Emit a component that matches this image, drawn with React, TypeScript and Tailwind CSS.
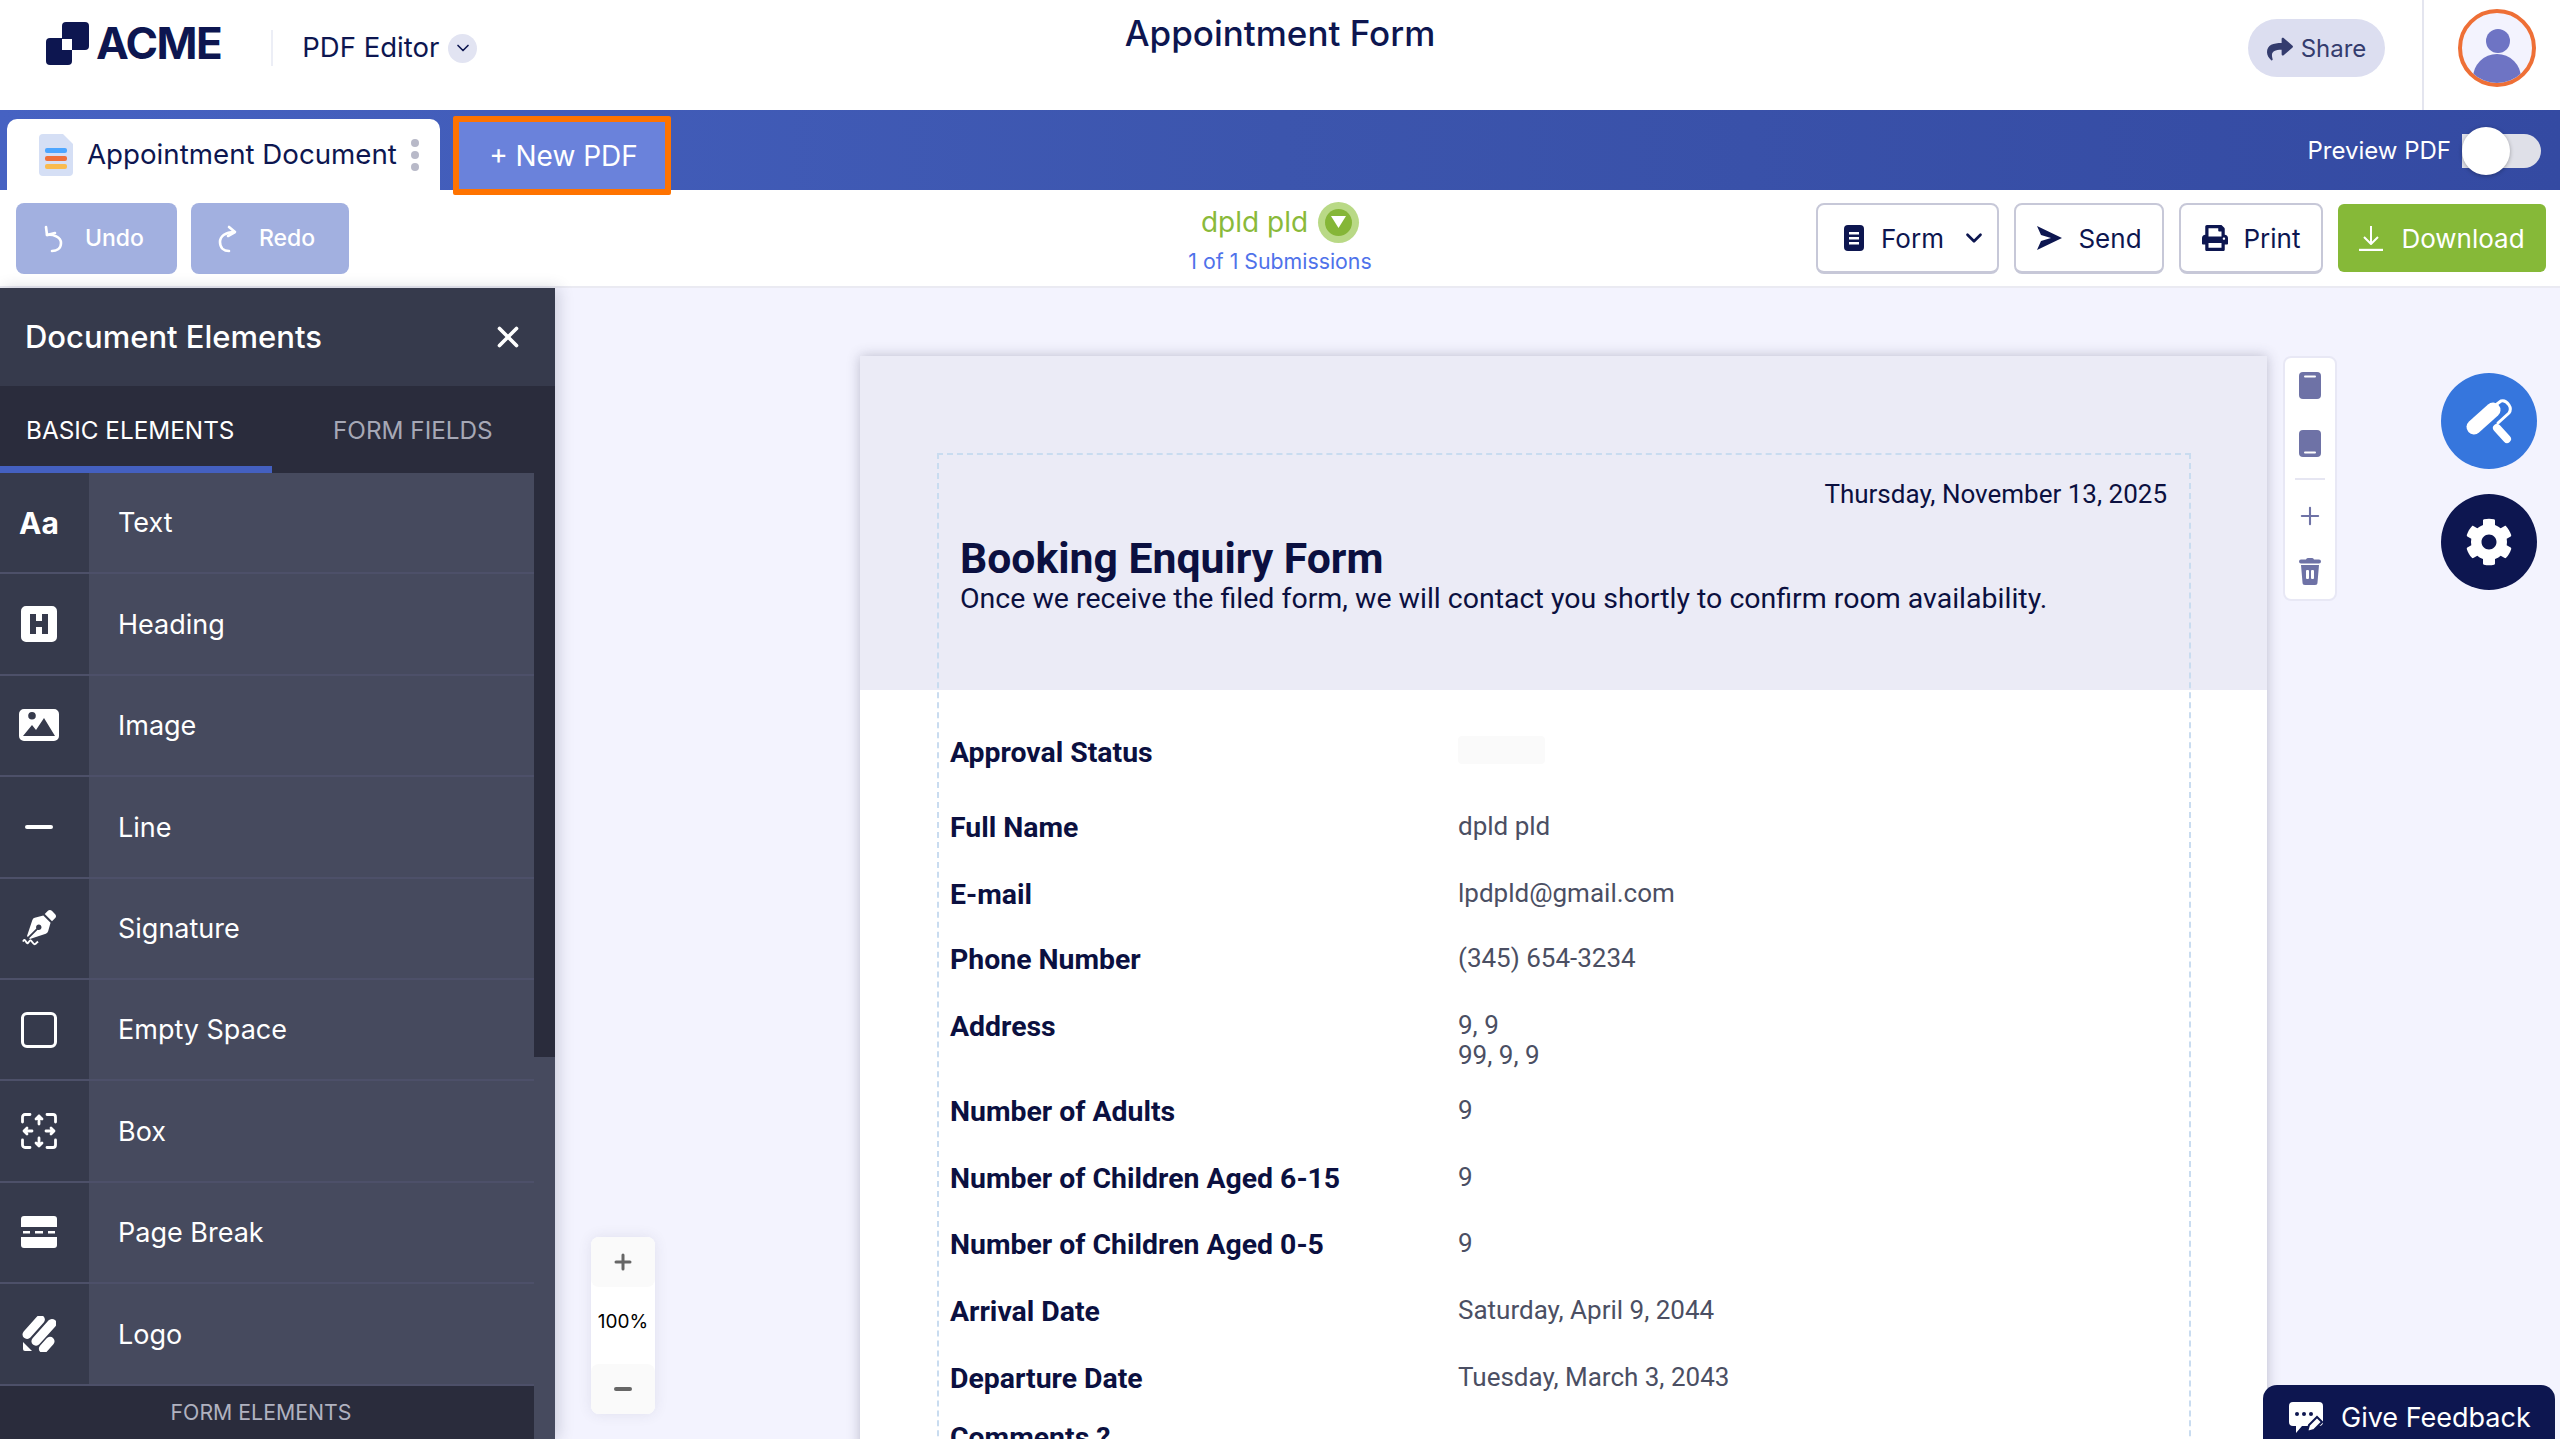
import type { ReactNode } from 'react'
import { ChevronDown, Plus, X } from 'lucide-react'
import { FaCog, FaPenNib, FaPrint, FaShare } from 'react-icons/fa'

function LogoMark() {
  return (
    <svg width="43" height="43" viewBox="0 0 43 43">
      <rect x="16" y="0" width="27" height="28" rx="4" fill="#0d1650" />
      <rect x="0" y="16" width="26" height="27" rx="4" fill="#0d1650" />
      <rect x="16" y="17" width="10" height="11" fill="#fff" />
    </svg>
  )
}

function TabDocIcon() {
  return (
    <svg width="34" height="42" viewBox="0 0 34 42">
      <path d="M4 0h20l10 10v28a4 4 0 0 1-4 4H4a4 4 0 0 1-4-4V4a4 4 0 0 1 4-4z" fill="#d5dff5" />
      <rect x="6" y="14" width="22" height="5" rx="2" fill="#4da6ff" />
      <rect x="6" y="22" width="22" height="5" rx="2" fill="#f0703a" />
      <rect x="6" y="30" width="22" height="5" rx="2" fill="#f9bb4f" />
    </svg>
  )
}

function UndoIcon() {
  return (
    <svg width="22" height="28" viewBox="0 0 22 28" fill="none" stroke="#fff" strokeWidth="2.6" strokeLinecap="round" strokeLinejoin="round">
      <path d="M3 2l1 8 8-2" />
      <path d="M4 10c6-1 14 2 14 8s-5 8-9 8" />
    </svg>
  )
}

function RedoIcon() {
  return (
    <svg width="22" height="28" viewBox="0 0 22 28" fill="none" stroke="#fff" strokeWidth="2.6" strokeLinecap="round" strokeLinejoin="round">
      <path d="M13 2l6 5-7 4" />
      <path d="M18 7c-8 0-14 4-14 10s4 9 9 9" />
    </svg>
  )
}

function FormIcon() {
  return (
    <svg width="20" height="26" viewBox="0 0 20 26">
      <rect width="20" height="26" rx="4" fill="#0d1650" />
      <rect x="5" y="7" width="10" height="2.5" fill="#fff" />
      <rect x="5" y="12" width="10" height="2.5" fill="#fff" />
      <rect x="5" y="17" width="10" height="2.5" fill="#fff" />
    </svg>
  )
}

function SendIcon() {
  return (
    <svg width="26" height="24" viewBox="0 0 26 24">
      <path d="M1 0l25 12L1 24l4-9 10-3L5 9z" fill="#0d1650" />
    </svg>
  )
}

function DownloadIcon() {
  return (
    <svg width="24" height="26" viewBox="0 0 24 26" fill="none" stroke="#fff" strokeWidth="2">
      <path d="M12 1v17M5 12l7 7 7-7" strokeLinejoin="round" />
      <path d="M0 25h24" strokeWidth="2.4" />
    </svg>
  )
}

function HeadingIcon() {
  return (
    <svg width="36" height="36" viewBox="0 0 36 36">
      <path fillRule="evenodd" d="M5 0h26a5 5 0 0 1 5 5v26a5 5 0 0 1-5 5H5a5 5 0 0 1-5-5V5a5 5 0 0 1 5-5zm4 8v20h6v-7h6v7h6V8h-6v7h-6V8z" fill="#fff" />
    </svg>
  )
}

function ImageIcon() {
  return (
    <svg width="40" height="32" viewBox="0 0 40 32">
      <path fillRule="evenodd" d="M5 0h30a5 5 0 0 1 5 5v22a5 5 0 0 1-5 5H5a5 5 0 0 1-5-5V5a5 5 0 0 1 5-5zm8 10.500a3.800 3.800 0 1 0 0-7.600 3.800 3.800 0 0 0 0 7.600zM4 27l9-11 4 5 8-12 11 18z" fill="#fff" />
    </svg>
  )
}

function SignatureIcon() {
  return (
    <span className="relative block h-[36px] w-[34px]">
      <FaPenNib className="absolute top-0 right-0 size-[29px] text-white" />
      <svg className="absolute bottom-0 left-0" width="17" height="10" viewBox="0 0 16 9" fill="none" stroke="#fff" strokeWidth="1.800">
        <path d="M1 5c2-5 3 4 5 1s2-3 4 0 3 1 5-1" />
      </svg>
    </span>
  )
}

function BoxIcon() {
  return (
    <svg width="36" height="36" viewBox="0 0 36 36" fill="none" stroke="#fff" strokeWidth="2.800" strokeLinecap="round" strokeLinejoin="round">
      <path d="M1.500 9V4a2.500 2.500 0 0 1 2.500-2.500h5M26 1.500h6A2.500 2.500 0 0 1 34.500 4v5M34.500 27v5a2.500 2.500 0 0 1-2.500 2.500h-6M9 34.500H4A2.500 2.500 0 0 1 1.500 32v-5" />
      <path d="M18 11V3M15 6l3-3 3 3M18 25v8M15 30l3 3 3-3M11 18H3M6 15l-3 3 3 3M25 18h8M30 15l3 3-3 3" />
    </svg>
  )
}

function PageBreakIcon() {
  return (
    <svg width="36" height="32" viewBox="0 0 36 32" fill="#fff">
      <path d="M3 0h30a3 3 0 0 1 3 3v8H0V3a3 3 0 0 1 3-3z" />
      <rect x="2" y="15" width="7" height="2.500" />
      <rect x="14" y="15" width="8" height="2.500" />
      <rect x="27" y="15" width="7" height="2.500" />
      <path d="M0 21h36v8a3 3 0 0 1-3 3H3a3 3 0 0 1-3-3z" />
    </svg>
  )
}

function BrandIcon() {
  return (
    <svg width="34" height="36" viewBox="0 0 34 36" fill="#fff">
      <rect x="-3" y="7" width="29" height="9" rx="4.500" transform="rotate(-48 11 11)" />
      <rect x="6" y="12" width="33" height="9" rx="4.500" transform="rotate(-48 22 17)" />
      <rect x="15" y="25" width="19" height="9" rx="4.500" transform="rotate(-48 24 29)" />
      <path d="M1 26l9 9H3a2 2 0 0 1-2-2z" />
    </svg>
  )
}

function RollerIcon() {
  return (
    <svg width="96" height="96" viewBox="0 0 96 96" fill="none" stroke="#fff" strokeLinecap="round" strokeLinejoin="round">
      <path d="M33 54L52 37" strokeWidth="15" />
      <path d="M56 31l4-3c3-1 6 1 8 4 2 3 2 5 0 8L57 50" strokeWidth="3" />
      <path d="M56 55l10 11" strokeWidth="8" />
    </svg>
  )
}

function PageTopIcon() {
  return (
    <svg width="22" height="27" viewBox="0 0 22 27">
      <rect width="22" height="27" rx="4" fill="#6e72a6" />
      <rect x="5" y="3.500" width="12" height="2" rx="1" fill="#fff" />
    </svg>
  )
}

function PageBottomIcon() {
  return (
    <svg width="22" height="27" viewBox="0 0 22 27">
      <rect width="22" height="27" rx="4" fill="#6e72a6" />
      <rect x="5" y="21.500" width="12" height="2" rx="1" fill="#fff" />
    </svg>
  )
}

function TrashIcon() {
  return (
    <svg width="22" height="27" viewBox="0 0 22 27">
      <path d="M7 1.500a2 2 0 0 1 2-1.500h4a2 2 0 0 1 2 1.500h5a2 2 0 0 1 0 4H2a2 2 0 0 1 0-4z" fill="#6e72a6" />
      <path d="M2 7h18l-1.500 17.500a2.500 2.500 0 0 1-2.500 2.500H6a2.500 2.500 0 0 1-2.500-2.500z" fill="#6e72a6" />
      <rect x="7" y="12" width="3" height="9" rx="1" fill="#fff" />
      <rect x="12" y="12" width="3" height="9" rx="1" fill="#fff" />
    </svg>
  )
}

function FeedbackIcon() {
  return (
    <svg width="34" height="32" viewBox="0 0 34 32">
      <path d="M4 0h26a4 4 0 0 1 4 4v16a4 4 0 0 1-4 4H13l-6 7v-7H4a4 4 0 0 1-4-4V4a4 4 0 0 1 4-4z" fill="#fff" />
      <circle cx="8" cy="12" r="2" fill="#0d1650" />
      <circle cx="15" cy="12" r="2" fill="#0d1650" />
      <circle cx="22" cy="12" r="2" fill="#0d1650" />
      <path d="M18 30l2-7 8-8 5 5-8 8z" fill="#fff" stroke="#0d1650" strokeWidth="2" />
    </svg>
  )
}

const elements: { label: string; icon: ReactNode }[] = [
  { label: 'Text', icon: <span className="font-['Inter'] text-[30px] leading-none font-bold text-white">Aa</span> },
  { label: 'Heading', icon: <HeadingIcon /> },
  { label: 'Image', icon: <ImageIcon /> },
  { label: 'Line', icon: <span className="block h-[4px] w-[28px] rounded-full bg-white" /> },
  { label: 'Signature', icon: <SignatureIcon /> },
  { label: 'Empty Space', icon: <span className="block h-[36px] w-[36px] rounded-[6px] border-[3px] border-white" /> },
  { label: 'Box', icon: <BoxIcon /> },
  { label: 'Page Break', icon: <PageBreakIcon /> },
  { label: 'Logo', icon: <BrandIcon /> },
]

const fields: { label: string; value?: string; rowClass: string; valueLines?: string[] }[] = [
  { label: 'Approval Status', rowClass: 'h-[75px]' },
  { label: 'Full Name', value: 'dpld pld', rowClass: 'h-[67px]' },
  { label: 'E-mail', value: 'lpdpld@gmail.com', rowClass: 'h-[65px]' },
  { label: 'Phone Number', value: '(345) 654-3234', rowClass: 'h-[67px]' },
  { label: 'Address', valueLines: ['9, 9', '99, 9, 9'], rowClass: 'h-[85px]' },
  { label: 'Number of Adults', value: '9', rowClass: 'h-[67px]' },
  { label: 'Number of Children Aged 6-15', value: '9', rowClass: 'h-[66px]' },
  { label: 'Number of Children Aged 0-5', value: '9', rowClass: 'h-[67px]' },
  { label: 'Arrival Date', value: 'Saturday, April 9, 2044', rowClass: 'h-[67px]' },
  { label: 'Departure Date', value: 'Tuesday, March 3, 2043', rowClass: 'h-[59px]' },
  { label: 'Comments ?', rowClass: 'h-[60px]' },
]

function TopBar() {
  return (
    <header className="grid h-[110px] flex-none grid-cols-[1fr_auto_1fr] bg-white">
      <div className="flex items-start">
        <div className="mt-[21px] ml-[46px] flex items-center gap-[7px]">
          <LogoMark />
          <span className="text-[44px] leading-none font-bold tracking-[-1.5px] text-[#0d1650]">ACME</span>
        </div>
        <div className="mt-[30px] ml-[50px] h-[36px] w-[2px] bg-[#eceef6]" />
        <div className="mt-[30px] ml-[29px] flex h-[36px] items-center gap-[9px]">
          <span className="text-[27.500px] text-[#0d1650]">PDF Editor</span>
          <span className="grid size-[29px] place-items-center rounded-full bg-[#e2e4f2]">
            <ChevronDown className="size-[20px] text-[#0d1650]" />
          </span>
        </div>
      </div>
      <h1 className="mt-[13px] text-[35px] leading-[40px] font-medium text-[#0d1650]">Appointment Form</h1>
      <div className="flex items-start justify-end">
        <button className="mt-[19px] flex h-[58px] w-[137px] items-center justify-center gap-[8px] rounded-full bg-[#dcdef0] pt-[2px] text-[24px] text-[#343c6e]">
          <FaShare className="size-[26px]" />
          Share
        </button>
        <div className="ml-[37px] flex h-full w-[138px] border-l-2 border-[#e4e5ef] pt-[9px] pl-[34px]">
          <div className="relative size-[78px] overflow-hidden rounded-full border-[4px] border-[#ee6f36] bg-[#f3f3fe]">
            <div className="absolute top-[16px] left-[24px] size-[24px] rounded-full bg-[#6e74c4]" />
            <div className="absolute top-[41px] left-[11px] h-[50px] w-[48px] rounded-full bg-[#6e74c4]" />
          </div>
        </div>
      </div>
    </header>
  )
}

function TabBar() {
  return (
    <div className="flex h-[80px] flex-none bg-gradient-to-r from-[#4662c2] via-[#3c55ad] to-[#344aa2] pl-[7px]">
      <div className="mt-[9px] flex h-[71px] w-[433px] items-center rounded-t-[10px] bg-white pl-[32px]">
        <TabDocIcon />
        <span className="ml-[14px] text-[27.700px] text-[#0d1650]">Appointment Document</span>
        <span className="ml-[14px] flex flex-col gap-[4px]">
          <span className="size-[8px] rounded-full bg-[#b8b9c8]" />
          <span className="size-[8px] rounded-full bg-[#b8b9c8]" />
          <span className="size-[8px] rounded-full bg-[#b8b9c8]" />
        </span>
      </div>
      <button className="relative z-20 mt-[6px] ml-[13px] h-[79px] w-[218px] rounded-[2px] border-[6px] border-[#ff7300] bg-[#6a82db] pl-[3px] text-[28px] text-white">
        + New PDF
      </button>
      <div className="ml-auto flex items-center pt-[2px] pr-[19px]">
        <span className="text-[24px] text-white">Preview PDF</span>
        <div className="relative ml-[11px] h-[34px] w-[79px] rounded-r-full bg-[#dfe0e8]">
          <div className="absolute top-[-7px] left-0 size-[48px] rounded-full bg-white shadow-[0_1px_4px_rgba(0,0,0,0.3)]" />
        </div>
      </div>
    </div>
  )
}

function ToolButton({ children, className }: { children: ReactNode; className: string }) {
  return (
    <button className={`flex h-[71px] items-center justify-center rounded-[8px] border-2 border-b-[3px] border-[#c7c8d8] bg-white text-[26px] text-[#0d1650] ${className}`}>
      {children}
    </button>
  )
}

function Toolbar() {
  return (
    <div className="z-10 grid h-[98px] flex-none grid-cols-[1fr_auto_1fr] border-b-2 border-[#eaeaf2] bg-white">
      <div className="flex gap-[14px] pt-[13px] pl-[16px]">
        <button className="flex h-[71px] w-[161px] items-center rounded-[8px] bg-[#a2b0e0] pl-[27px] text-[23px] font-medium text-white">
          <UndoIcon />
          <span className="ml-[20px]">Undo</span>
        </button>
        <button className="flex h-[71px] w-[158px] items-center rounded-[8px] bg-[#a2b0e0] pl-[25px] text-[23px] font-medium text-white">
          <RedoIcon />
          <span className="ml-[21px]">Redo</span>
        </button>
      </div>
      <div className="flex flex-col items-center pt-[11px]">
        <div className="flex items-center gap-[10px]">
          <span className="text-[28px] leading-[42px] text-[#8aba3a]">dpld pld</span>
          <span className="grid size-[41px] place-items-center rounded-full bg-[#b9d986]">
            <span className="grid size-[27px] place-items-center rounded-full bg-[#85b637]">
              <svg width="15" height="12" viewBox="0 0 15 12">
                <path d="M0 0h15l-7.500 12z" fill="#fff" />
              </svg>
            </span>
          </span>
        </div>
        <span className="mt-[4px] text-[21.300px] leading-[28px] text-[#4f72ea]">1 of 1 Submissions</span>
      </div>
      <div className="flex justify-end gap-[15px] pt-[13px] pr-[14px]">
        <ToolButton className="w-[183px] gap-[17px] pl-[16px]">
          <FormIcon />
          Form
          <ChevronDown className="size-[26px]" strokeWidth={2.5} />
        </ToolButton>
        <ToolButton className="w-[150px] gap-[16px]">
          <SendIcon />
          Send
        </ToolButton>
        <ToolButton className="w-[144px] gap-[16px]">
          <FaPrint className="size-[26px]" />
          Print
        </ToolButton>
        <button className="mt-[1px] flex h-[68px] w-[208px] items-center justify-center gap-[18px] rounded-[6px] bg-[#86b938] text-[26px] text-white">
          <DownloadIcon />
          Download
        </button>
      </div>
    </div>
  )
}

function Sidebar() {
  return (
    <aside className="z-10 flex w-[555px] flex-none flex-col shadow-[4px_0_14px_rgba(40,42,70,0.18)]">
      <div className="flex h-[98px] flex-none items-center justify-between bg-[#363a4c] pr-[30px] pl-[25px]">
        <span className="text-[31px] font-medium text-white">Document Elements</span>
        <X className="size-[34px] text-white" strokeWidth={2.6} />
      </div>
      <div className="flex h-[87px] flex-none bg-[#2a2c3c] text-[24.300px]">
        <div className="flex w-[272px] items-center border-b-[7px] border-[#4460c0] pt-[9px] pl-[26px] text-white">BASIC ELEMENTS</div>
        <div className="flex items-center pt-[2px] pl-[61px] text-[#a6a8b6]">FORM FIELDS</div>
      </div>
      <div className="flex min-h-0 flex-1">
        <div className="flex w-[534px] flex-none flex-col">
          <div className="flex-none">
            {elements.map((el) => (
              <div key={el.label} className="flex h-[101.400px] border-b-2 border-[#4d5069]">
                <div className="flex w-[89px] flex-none items-center justify-center bg-[#363a4c] pr-[11px]">{el.icon}</div>
                <div className="flex flex-1 items-center bg-[#464a5e] pt-[2px] pl-[29px] text-[27px] text-white">{el.label}</div>
              </div>
            ))}
          </div>
          <div className="flex flex-1 items-center justify-center bg-[#2a2c3c] pt-[2px] pr-[12px] text-[21.300px] text-[#b0b2c0]">FORM ELEMENTS</div>
        </div>
        <div className="flex w-[21px] flex-none flex-col bg-[#464a5e]">
          <div className="h-[584px] bg-[#2a2c3c]" />
        </div>
      </div>
    </aside>
  )
}

function Document() {
  return (
    <div className="relative h-[1200px] w-[1407px] flex-none bg-white font-['Roboto'] shadow-[0_0_12px_rgba(60,60,90,0.3)]">
      <div className="h-[334px] bg-[#ebebf6] pt-[118px] pr-[100px] pl-[100px] text-[#0b1040]">
        <p className="text-right text-[26px] leading-[40px]">Thursday, November 13, 2025</p>
        <h2 className="mt-[19px] text-[42.700px] leading-[50px] font-bold">Booking Enquiry Form</h2>
        <p className="mt-[-2px] text-[28.500px] leading-[36px]">Once we receive the filed form, we will contact you shortly to confirm room availability.</p>
      </div>
      <div className="pt-[46px] pl-[90px]">
        {fields.map((f) => (
          <div key={f.label} className={`flex items-start ${f.rowClass}`}>
            <span className="w-[508px] flex-none text-[28.400px] leading-[34px] font-bold text-[#0b1040]">{f.label}</span>
            {f.value && <span className="mt-[-2px] text-[26px] leading-[34px] text-[#4b4f63]">{f.value}</span>}
            {f.valueLines && (
              <div className="text-[26px] leading-[30px] text-[#4b4f63]">
                {f.valueLines.map((line) => (
                  <div key={line}>{line}</div>
                ))}
              </div>
            )}
            {f.label === 'Approval Status' && <span className="h-[28px] w-[87px] rounded-[4px] bg-[#fafafa]" />}
          </div>
        ))}
      </div>
      <div className="pointer-events-none absolute top-[97px] bottom-0 left-[77px] w-[1254px] border-2 border-b-0 border-dashed border-[#c9dcf0]" />
    </div>
  )
}

function PageTools() {
  return (
    <div className="flex h-[245px] w-[54px] flex-none flex-col items-center rounded-[8px] border-2 border-[#e8e8f5] bg-white pt-[14px] text-[#6e72a6]">
      <PageTopIcon />
      <div className="mt-[31px]">
        <PageBottomIcon />
      </div>
      <div className="mt-[21px] h-[2px] w-[30px] bg-[#e6e6f2]" />
      <Plus className="mt-[22px] size-[28px]" strokeWidth={1.8} />
      <div className="mt-[28px]">
        <TrashIcon />
      </div>
    </div>
  )
}

export default function App() {
  return (
    <div className="flex h-[1439px] w-[2560px] flex-col overflow-hidden bg-[#f3f3fe] font-['Inter',sans-serif]">
      <TopBar />
      <TabBar />
      <Toolbar />
      <div className="relative flex min-h-0 flex-1">
        <Sidebar />
        <main className="flex min-w-0 flex-1 items-start gap-[16px] overflow-hidden pt-[68px] pl-[305px]">
          <Document />
          <PageTools />
        </main>

        <div className="absolute top-[949px] left-[591px] flex h-[177px] w-[64px] flex-col items-center rounded-[8px] bg-white shadow-[0_0_14px_rgba(60,60,90,0.1)]">
          <div className="flex h-[50px] w-full items-center justify-center rounded-[8px] bg-[#fafafa] text-[#666]">
            <Plus className="size-[24px]" strokeWidth={3} />
          </div>
          <div className="flex h-[70px] items-center text-[19px] text-black">100%</div>
          <div className="mt-[7px] flex h-[50px] w-full items-center justify-center rounded-[8px] bg-[#fafafa]">
            <span className="h-[4px] w-[18px] rounded-full bg-[#666]" />
          </div>
        </div>

        <div className="absolute top-[85px] left-[2441px] size-[96px] rounded-full bg-[#3676dd]">
          <RollerIcon />
        </div>
        <div className="absolute top-[206px] left-[2441px] grid size-[96px] place-items-center rounded-full bg-[#0d1650]">
          <FaCog className="size-[48px] text-white" />
        </div>
        <div className="absolute right-[5px] bottom-0 flex h-[54px] w-[292px] items-center gap-[18px] rounded-t-[14px] bg-[#0d1650] pt-[12px] pl-[26px] text-[27px] text-white">
          <FeedbackIcon />
          Give Feedback
        </div>
      </div>
    </div>
  )
}
